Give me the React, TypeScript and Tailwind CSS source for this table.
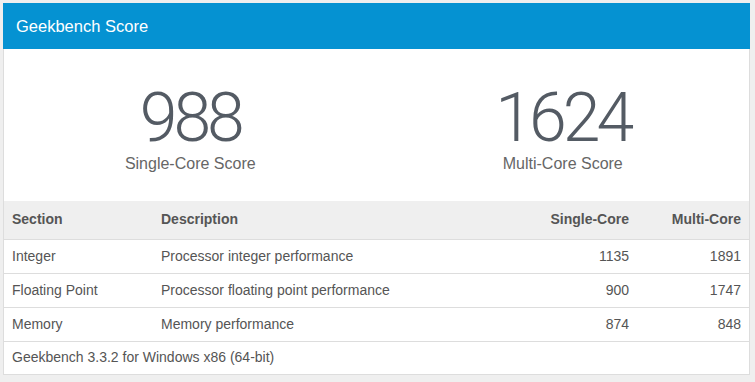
const rows = [
  { section: 'Integer', description: 'Processor integer performance', single: 1135, multi: 1891 },
  { section: 'Floating Point', description: 'Processor floating point performance', single: 900, multi: 1747 },
  { section: 'Memory', description: 'Memory performance', single: 874, multi: 848 },
]

function Score({ value, label }: { value: number; label: string }) {
  return (
    <div className="flex flex-col items-center">
      <div className="font-['Roboto',sans-serif] font-light text-[68px] leading-[60px] tracking-[-4px] text-[#545b64]">
        {value}
      </div>
      <div className="mt-[6px] text-[16px] leading-[20px] text-[#666]">{label}</div>
    </div>
  )
}

export default function App() {
  return (
    <div className="min-h-screen bg-[#efefef] pt-[3px] pl-[3px] font-['Liberation_Sans',Arial,sans-serif]">
      <div className="w-[747px] border border-[#dddddd] bg-white">
        <div className="h-[46px] -mt-px -mx-px bg-[#0592d2] px-[13px] flex items-center text-[16.5px] text-white">
          Geekbench Score
        </div>

        <div className="grid grid-cols-2 pt-[39px] pb-[27px]">
          <Score value={988} label="Single-Core Score" />
          <Score value={1624} label="Multi-Core Score" />
        </div>

        <table className="w-full table-fixed border-collapse text-[14px] text-[#555]">
          <colgroup>
            <col className="w-[149px]" />
            <col />
            <col className="w-[140px]" />
            <col className="w-[112px]" />
          </colgroup>
          <thead>
            <tr className="h-[38px] bg-[#efefef] border-b border-[#dddddd] font-bold">
              <th className="px-2 text-left">Section</th>
              <th className="px-2 text-left">Description</th>
              <th className="px-2 text-right">Single-Core</th>
              <th className="px-2 text-right">Multi-Core</th>
            </tr>
          </thead>
          <tbody>
            {rows.map((r) => (
              <tr key={r.section} className="h-[34px] border-b border-[#dddddd]">
                <td className="px-2">{r.section}</td>
                <td className="px-2">{r.description}</td>
                <td className="px-2 text-right">{r.single}</td>
                <td className="px-2 text-right">{r.multi}</td>
              </tr>
            ))}
            <tr className="h-[33px]">
              <td className="px-2" colSpan={4}>
                Geekbench 3.3.2 for Windows x86 (64-bit)
              </td>
            </tr>
          </tbody>
        </table>
      </div>
    </div>
  )
}
